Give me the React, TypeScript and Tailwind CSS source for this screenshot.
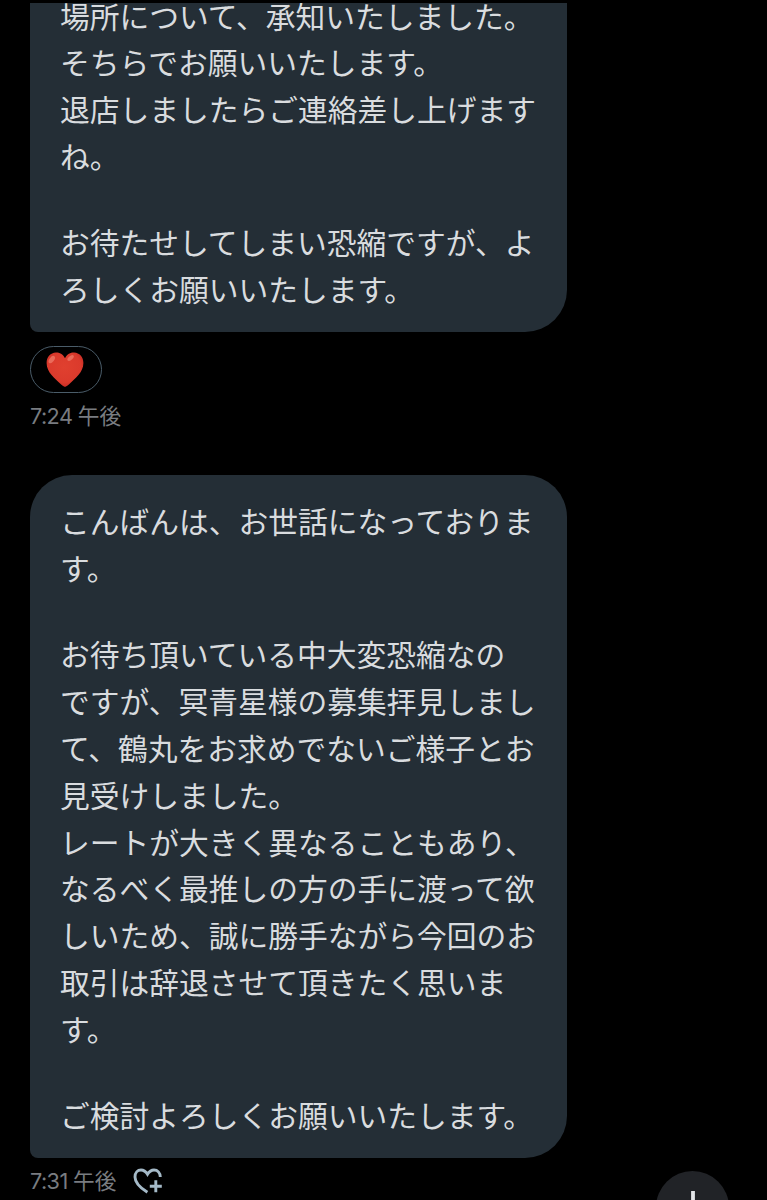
import React from 'react';

interface Message {
  id: string;
  lines: string[];
  time: string;
  period: string;
}

const messages: Message[] = [
  {
    id: '1',
    lines: [
      '場所について、承知いたしました。',
      'そちらでお願いいたします。',
      '退店しましたらご連絡差し上げます',
      'ね。',
      '',
      'お待たせしてしまい恐縮ですが、よ',
      'ろしくお願いいたします。',
    ],
    time: '7:24',
    period: '午後',
  },
  {
    id: '2',
    lines: [
      'こんばんは、お世話になっておりま',
      'す。',
      '',
      'お待ち頂いている中大変恐縮なの',
      'ですが、冥青星様の募集拝見しまし',
      'て、鶴丸をお求めでないご様子とお',
      '見受けしました。',
      'レートが大きく異なることもあり、',
      'なるべく最推しの方の手に渡って欲',
      'しいため、誠に勝手ながら今回のお',
      '取引は辞退させて頂きたく思いま',
      'す。',
      '',
      'ご検討よろしくお願いいたします。',
    ],
    time: '7:31',
    period: '午後',
  },
];

const HeartEmoji: React.FC = () => (
  <svg width="38" height="35" viewBox="0 0 38 35">
    <defs>
      <radialGradient id="heart" cx="0.48" cy="0.42" r="0.6">
        <stop offset="0" stopColor="#e0402f" />
        <stop offset="0.75" stopColor="#db3a2c" />
        <stop offset="1" stopColor="#c62b24" />
      </radialGradient>
    </defs>
    <path
      d="M19 6.2C16.8 2 13.4.4 9.8.5 4.6.7.6 5 .6 11c0 9.500 8.600 15.800 14 20.900 1.600 1.500 2.800 2.300 3.800 2.800.4.2.8.2 1.200 0 1-.5 2.200-1.300 3.800-2.800C28.800 26.800 37.400 20.500 37.400 11 37.400 5 33.400.7 28.200.5 24.600.4 21.200 2 19 6.200z"
      fill="url(#heart)"
    />
    <ellipse cx="5.800" cy="7.600" rx="2.300" ry="4.200" fill="#ea6b5a" transform="rotate(38 5.800 7.600)" />
    <ellipse cx="24.600" cy="6" rx="1.900" ry="3.900" fill="#ea6b5a" transform="rotate(48 24.600 6)" />
  </svg>
);

const HeartPlusIcon: React.FC = () => (
  <svg width="30" height="27" viewBox="0 0 30 27" fill="none" stroke="#a5bac8" strokeWidth="2.900">
    <path d="M14.400 24.200C8.200 20.400 2 15.400 2 8.900c0-4.100 2.600-6.900 6-6.900 2.700 0 4.800 1.500 6.500 4.200C16.200 3.500 18.300 2 21 2c3.500 0 6.200 2.800 6.300 7" />
    <path d="M22.800 12.300v12M16.800 18.300h12" />
  </svg>
);

const Time: React.FC<{ time: string; period: string }> = ({ time, period }) => (
  <span className="whitespace-pre font-['Inter','Noto_Sans_CJK_JP',sans-serif] text-[21.7px] leading-[34px] text-[#797c80]">
    <span className="tracking-[-0.6px]">{time} </span>
    {period}
  </span>
);

const Bubble: React.FC<{ lines: string[]; clipped?: boolean }> = ({ lines, clipped }) => (
  <div
    className={`w-[537px] flex flex-col justify-end bg-[#242e36] text-[#d9dcdf] pl-[30px] pb-[20px] whitespace-nowrap text-[29.75px] leading-[46.9px] rounded-bl-[8px] rounded-br-[42px] ${
      clipped ? 'h-[329px] overflow-hidden' : 'h-[683px] rounded-t-[42px]'
    }`}
  >
    {lines.map((line, i) =>
      line ? (
        <p key={i} className="shrink-0">{line}</p>
      ) : (
        <div key={i} className="h-[39px] shrink-0" />
      )
    )}
  </div>
);

export default function App() {
  const [first, second] = messages;

  return (
    <div
      lang="ja"
      className="h-[1200px] w-[767px] overflow-hidden bg-black pt-[3px] pl-[30px] font-['Noto_Sans_CJK_JP',sans-serif]"
    >
      <Bubble lines={first.lines} clipped />
      <div className="mt-[14px] flex h-[47px] w-[72px] items-center justify-center rounded-full border border-[#4a5c69] pr-[2px]">
        <HeartEmoji />
      </div>
      <div className="mt-[6px] flex h-[34px] items-center">
        <Time time={first.time} period={first.period} />
      </div>

      <div className="mt-[42px]">
        <Bubble lines={second.lines} />
      </div>
      <div className="flex justify-between pr-[38px]">
        <div className="mt-[6px] flex h-[34px] items-center gap-[16px]">
          <Time time={second.time} period={second.period} />
          <HeartPlusIcon />
        </div>
        {/* Scroll to bottom */}
        <button className="mt-[13px] flex h-[73px] w-[73px] justify-center rounded-full bg-[#212327] pt-[20px]">
          <svg width="30" height="32" viewBox="0 0 30 32" fill="none" stroke="#e3e5e8" strokeWidth="3.800">
            <path d="M15 0v29M3 17l12 12 12-12" />
          </svg>
        </button>
      </div>
    </div>
  );
}
